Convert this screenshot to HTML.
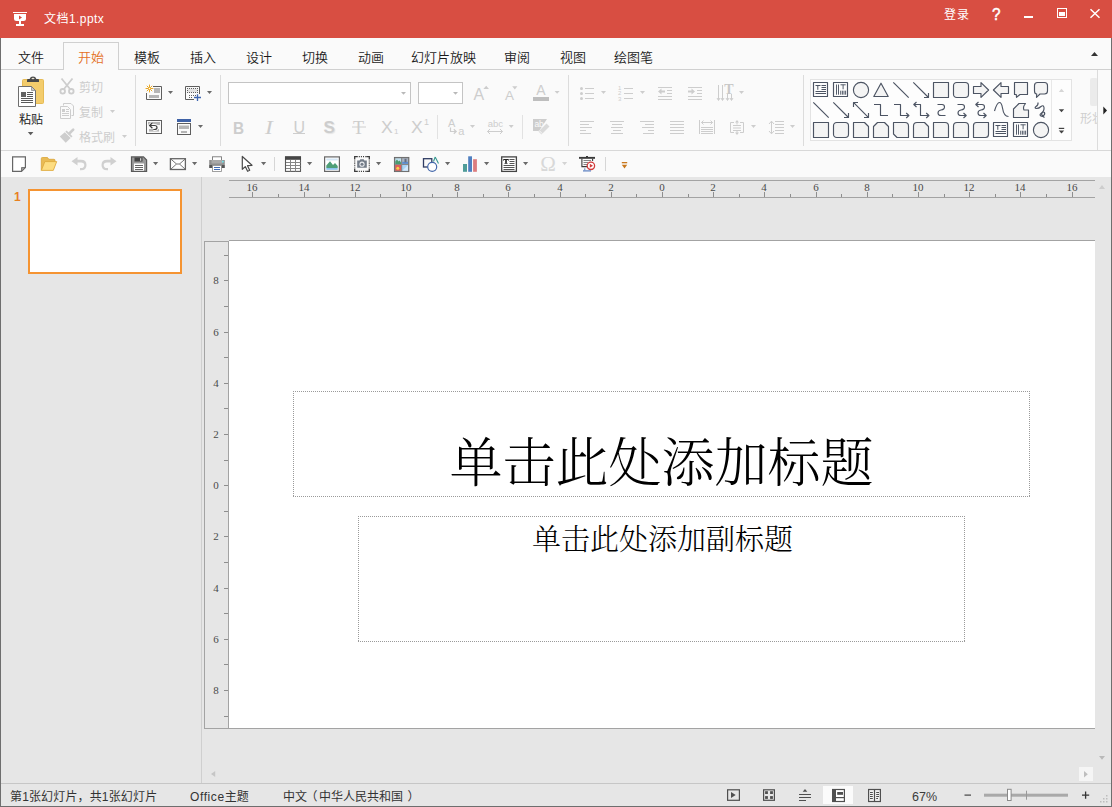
<!DOCTYPE html>
<html lang="zh-CN">
<head>
<meta charset="utf-8">
<title>文档1.pptx</title>
<style>
*{box-sizing:border-box;margin:0;padding:0}
html,body{width:1112px;height:807px;overflow:hidden}
body{position:relative;background:#e6e6e6;font-family:"Liberation Sans","Noto Sans CJK SC",sans-serif;font-size:12px;color:#222}
.abs{position:absolute}
#title{position:absolute;left:0;top:0;width:1112px;height:38px;background:#d84e42;color:#fff}
#title .name{position:absolute;left:44px;top:11px;font-size:12px;line-height:16px;letter-spacing:.45px;white-space:nowrap}
#title .q{position:absolute;left:991.5px;top:6px;font-size:17px;line-height:18px;font-weight:400;-webkit-text-stroke:.5px #fff;transform:scaleX(.9);transform-origin:0 0}
#title .login{position:absolute;left:944px;top:7px;letter-spacing:1px;font-size:12px;line-height:16px;white-space:nowrap}
#tabs{position:absolute;left:0;top:38px;width:1112px;height:32px;background:#fafafa;border-bottom:1px solid #d0d0d0}
#tabs span{position:absolute;top:12px;font-size:13px;line-height:16px;color:#1a1a1a;font-weight:350;white-space:nowrap}
#tabs .act{position:absolute;left:63px;top:4px;width:56px;height:28px;background:#fafafa;border:1px solid #d0d0d0;border-bottom:none}
#tabs span.on{color:#e4701e}
#ribbon{position:absolute;left:0;top:70px;width:1112px;height:81px;background:#fafafa;border-bottom:1px solid #d8d8d8}
.vsep{position:absolute;width:1px;background:#d9d9d9}
#qat{position:absolute;left:0;top:151px;width:1112px;height:26px;background:#fafafa}
#left{position:absolute;left:0;top:177px;width:202px;height:608px;background:#e6e6e6;border-right:1px solid #cfcfcf}
#status{position:absolute;left:0;top:783px;width:1112px;height:24px;background:#e6e6e6;border-top:1px solid #c6c6c6;font-size:12px;color:#333}
#status span{position:absolute;top:5px;line-height:16px;white-space:nowrap}
#winL{position:absolute;left:0;top:38px;width:1px;height:770px;background:#6e6e6e}
#winR{position:absolute;left:1111px;top:38px;width:1px;height:770px;background:#6e6e6e}
#winB{position:absolute;left:0;top:806px;width:1112px;height:1px;background:#6e6e6e}
.dis{color:#c3c3c3}
.tk{position:absolute;width:1px;background:#8e8e8e}
.rn{position:absolute;width:20px;text-align:center;font:normal 11px/15px "Liberation Serif",serif;color:#4a4a4a}
#t1{left:293px;top:429px;width:737px;text-align:center;font-family:"Liberation Serif","Noto Serif CJK SC",serif;font-weight:300;font-size:53px;line-height:70px;color:#000;white-space:nowrap;padding-left:0}
#t2{left:359px;top:520px;width:607px;text-align:center;font-family:"Liberation Serif","Noto Serif CJK SC",serif;font-weight:300;font-size:29px;line-height:40px;color:#000;white-space:nowrap}
svg{position:absolute;overflow:visible}
</style>
</head>
<body>
<!--TITLE-->
<div id="title">
<svg style="left:13px;top:12px" width="14" height="14" viewBox="0 0 14 14"><rect x="0" y="0" width="14" height="1" fill="#fff"/><path d="M1 2H13V6.5Q13 9 10.5 9H3.5Q1 9 1 6.5Z" fill="#fff"/><rect x="6" y="9" width="2" height="3.2" fill="#fff"/><rect x="3" y="12" width="8" height="2" fill="#fff"/><path d="M6 3.4L9 5.4L6 7.4Z" fill="#d84e42"/></svg>
<span class="name">文档1.pptx</span>
<span class="login">登录</span>
<span class="q">?</span>
<div class="abs" style="left:1024px;top:16px;width:9px;height:2px;background:#fff"></div>
<div class="abs" style="left:1057px;top:8px;width:10px;height:10px;border:1px solid #fff"></div>
<div class="abs" style="left:1059px;top:12px;width:6px;height:4px;background:#fff"></div>
<svg style="left:1090px;top:9px" width="10" height="9" viewBox="0 0 10 9"><path d="M0.5 0.3L9.5 8.7M9.5 0.3L0.5 8.7" stroke="#fff" stroke-width="1.5" fill="none"/></svg>
</div>
<!--TABS-->
<div id="tabs">
<div class="act"></div>
<span style="left:18px">文件</span>
<span class="on" style="left:78px">开始</span>
<span style="left:134px">模板</span>
<span style="left:190px">插入</span>
<span style="left:246px">设计</span>
<span style="left:302px">切换</span>
<span style="left:358px">动画</span>
<span style="left:411px">幻灯片放映</span>
<span style="left:504px">审阅</span>
<span style="left:560px">视图</span>
<span style="left:614px">绘图笔</span>
</div>
<!--RIBBON-->
<div id="ribbon"></div>
<div id="rb" class="abs" style="left:0;top:0;width:1112px;height:151px">
<svg style="left:0;top:0" width="1112" height="151" viewBox="0 0 1112 151">
<rect x="135" y="75" width="1" height="71" fill="#dcdcdc"/>
<rect x="220" y="75" width="1" height="71" fill="#dcdcdc"/>
<rect x="568" y="75" width="1" height="71" fill="#dcdcdc"/>
<rect x="803" y="75" width="1" height="71" fill="#dcdcdc"/>
<rect x="437" y="115" width="1" height="24" fill="#e2e2e2"/>
<rect x="522" y="115" width="1" height="24" fill="#e2e2e2"/>
<rect x="22.5" y="79.5" width="21" height="24" rx="1" fill="#f3cc6c" stroke="#e6bb55"/>
<path d="M27 82V80Q27 79 28 79H29.6Q30.4 76.6 33 76.6Q35.600 76.600 36.400 79H38Q39 79 39 80V82Z" fill="#484848"/>
<ellipse cx="33" cy="78.500" rx="1.500" ry="0.800" fill="#e8e2d0"/>
<path d="M18.5 86.5H31.5L35.5 90.5V106.5H18.5Z" fill="#fff" stroke="#6e6e6e"/>
<path d="M31.5 86.5V90.5H35.5Z" fill="#c9c9c9" stroke="#6e6e6e" stroke-width="0.6"/>
<rect x="21" y="92" width="5" height="5" fill="#636363"/>
<rect x="27" y="92" width="6" height="1" fill="#5a5a5a"/>
<rect x="27" y="94" width="6" height="1" fill="#5a5a5a"/>
<rect x="27" y="96" width="6" height="1" fill="#5a5a5a"/>
<rect x="21" y="98" width="12" height="1" fill="#5a5a5a"/>
<rect x="21" y="100" width="12" height="1" fill="#5a5a5a"/>
<rect x="21" y="102" width="12" height="1" fill="#5a5a5a"/>
<path d="M27.8 132h5.6l-2.8 3.2z" fill="#5c5c5c"/>
<g fill="none" stroke="#cdcdcd" stroke-width="1.800"><path d="M61.500 78.500L70.200 89.300M72.500 78.500L63.800 89.300"/><circle cx="62.7" cy="91.3" r="2.3"/><circle cx="71.3" cy="91.3" r="2.3"/></g>
<g fill="none" stroke="#cdcdcd" stroke-width="1"><path d="M63.500 105.500V103.500H71L73.500 106V115.500H71.500"/><path d="M60.500 106.500H67.500L70.500 109.500V118.500H60.500Z" fill="#fafafa"/><path d="M62 113.500H69M62 115.500H69M66 109.500H69M66 111.500H69"/></g>
<rect x="62" y="109" width="3" height="3" fill="#cdcdcd"/>
<path d="M110 110h5l-2.5 3z" fill="#cdcdcd"/>
<path d="M73.200 129.600L69.300 133.500" stroke="#cdcdcd" stroke-width="2.600" stroke-linecap="round"/>
<path d="M66 131.100L71.900 136.900" stroke="#cdcdcd" stroke-width="1.700"/>
<path d="M59.800 136.600L64.800 132.200L70.700 138L65.700 142.700Z" fill="#cdcdcd"/>
<path d="M122 135h5l-2.5 3z" fill="#cdcdcd"/>
<path d="M153 86.5H161.5V99.5H146.5V93" fill="none" stroke="#5e5e5e"/>
<rect x="154" y="88" width="6" height="5" fill="#b5b5b5"/><rect x="149" y="95" width="10" height="3" fill="#b5b5b5"/>
<g stroke="#e9a825" stroke-width="1"><path d="M149.500 84.600V92.400M145.600 88.500H153.400M146.800 85.800L152.200 91.200M152.200 85.800L146.800 91.200"/></g><circle cx="149.500" cy="88.500" r="1.100" fill="#fff" stroke="#e9a825" stroke-width="0.700"/>
<path d="M168 91h5l-2.5 3z" fill="#6a6a6a"/>
<path d="M199.500 94V86.500H185.500V99.500H194" fill="none" stroke="#5e5e5e"/>
<rect x="187.500" y="88.500" width="10" height="4" fill="#e2e2e2"/>
<path d="M187 88.500H198M187 92.500H198M189 95.500H196.500M189 97.500H193" fill="none" stroke="#5e5e5e" stroke-dasharray="1 1"/>
<path d="M187.500 90V91M197.500 90V91" fill="none" stroke="#5e5e5e"/>
<path d="M197.500 94.300V101M194 97.500H201" stroke="#3f66b0" stroke-width="1.300"/>
<path d="M207 91h5l-2.5 3z" fill="#6a6a6a"/>
<rect x="146.500" y="120.500" width="15" height="13" fill="#fafafa" stroke="#5e5e5e"/>
<rect x="148" y="122" width="12" height="3" fill="#b5b5b5"/><rect x="149" y="129" width="10" height="2.600" fill="#b5b5b5"/>
<path d="M150 125.500H154.500Q157 125.500 157 127.500Q157 129.500 154.500 129.500H153.300M152.400 122.800L149.600 125.500L152.400 128.200" fill="none" stroke="#fafafa" stroke-width="3"/>
<path d="M150 125.500H154.500Q157 125.500 157 127.500Q157 129.500 154.500 129.500H153.300" fill="none" stroke="#3e3e3e" stroke-width="1.200"/><path d="M152.400 122.800L149.600 125.500L152.400 128.200" fill="none" stroke="#3e3e3e" stroke-width="1.200"/>
<rect x="177" y="119" width="14" height="3" fill="#3f62a6"/>
<rect x="177.5" y="123.5" width="13" height="11" fill="#fafafa" stroke="#5e5e5e"/>
<rect x="179" y="125.5" width="10" height="3.5" fill="#b5b5b5"/><rect x="181" y="131" width="6" height="2" fill="#b5b5b5"/>
<path d="M198 125h5l-2.5 3z" fill="#6a6a6a"/>
<rect x="228.5" y="82.5" width="182" height="21" fill="#fff" stroke="#c4c4c4"/>
<rect x="418.5" y="82.5" width="44" height="21" fill="#fff" stroke="#c4c4c4"/>
<path d="M401 92h5l-2.5 2.8z" fill="#b9b9b9"/>
<path d="M453 92h5l-2.5 2.8z" fill="#b9b9b9"/>
<path d="M483.4 89L486.2 85.8L489 89Z" fill="#cdcdcd"/>
<path d="M512.2 86.2H517.4L514.8 89.4Z" fill="#cdcdcd"/>
<rect x="533" y="97" width="16" height="4" fill="#bebebe"/>
<path d="M554.6 91h5l-2.5 2.8z" fill="#cdcdcd"/>
<rect x="293" y="133" width="12" height="1" fill="#cdcdcd"/>
<rect x="352" y="126.5" width="14" height="1" fill="#cdcdcd"/>
<path d="M450.500 127.500V131.500H456M453.800 129.200L456.200 131.500L453.800 133.800" fill="none" stroke="#cdcdcd" stroke-width="1.200"/>
<path d="M470 125h5l-2.5 3z" fill="#cdcdcd"/>
<path d="M487.5 131.5H502.5M490 129L487.5 131.5L490 134M500 129L502.5 131.5L500 134" fill="none" stroke="#cdcdcd"/>
<path d="M508.7 125h5l-2.5 3z" fill="#cdcdcd"/>
<path d="M533 119H547L542 126.5L539 131H533Z" fill="#cdcdcd"/>
<path d="M546.5 123.5L549.5 126.5L541.5 134.5L538.5 131.5Z" fill="#dadada"/>
<path d="M539.3 130.7L542.3 133.7" stroke="#fafafa" stroke-width="1"/>
<circle cx="581.5" cy="88.5" r="1.5" fill="#cdcdcd"/>
<rect x="585" y="88" width="9" height="1" fill="#cdcdcd"/>
<rect x="624" y="88" width="9" height="1" fill="#cdcdcd"/>
<circle cx="581.5" cy="93.5" r="1.5" fill="#cdcdcd"/>
<rect x="585" y="93" width="9" height="1" fill="#cdcdcd"/>
<rect x="624" y="93" width="9" height="1" fill="#cdcdcd"/>
<circle cx="581.5" cy="98.5" r="1.5" fill="#cdcdcd"/>
<rect x="585" y="98" width="9" height="1" fill="#cdcdcd"/>
<rect x="624" y="98" width="9" height="1" fill="#cdcdcd"/>
<path d="M601 91h5l-2.5 3z" fill="#cdcdcd"/>
<path d="M640 91h5l-2.5 3z" fill="#cdcdcd"/>
<rect x="658" y="87" width="14" height="1" fill="#cdcdcd"/>
<rect x="688" y="87" width="14" height="1" fill="#cdcdcd"/>
<rect x="658" y="96" width="14" height="1" fill="#cdcdcd"/>
<rect x="688" y="96" width="14" height="1" fill="#cdcdcd"/>
<rect x="658" y="99" width="14" height="1" fill="#cdcdcd"/>
<rect x="688" y="99" width="14" height="1" fill="#cdcdcd"/>
<rect x="667" y="90" width="5" height="1" fill="#cdcdcd"/>
<rect x="697" y="90" width="5" height="1" fill="#cdcdcd"/>
<rect x="667" y="93" width="5" height="1" fill="#cdcdcd"/>
<rect x="697" y="93" width="5" height="1" fill="#cdcdcd"/>
<path d="M658 91.5L661.5 88.5V90.5H665V92.5H661.5V94.5Z" fill="#cdcdcd"/>
<path d="M695 91.5L691.5 88.5V90.5H688V92.5H691.5V94.5Z" fill="#cdcdcd"/>
<path d="M718.5 85V100M722.5 85V100M727.5 94V100M731.5 94V100" stroke="#cdcdcd"/>
<path d="M717 98L718.5 100.5L720 98M721 98L722.5 100.5L724 98M726 98L727.5 100.5L729 98M730 98L731.5 100.5L733 98" fill="none" stroke="#cdcdcd"/>
<path d="M739 91h5l-2.5 3z" fill="#cdcdcd"/>
<rect x="580" y="121" width="14" height="1" fill="#cdcdcd"/>
<rect x="580" y="124" width="9" height="1" fill="#cdcdcd"/>
<rect x="580" y="127" width="12" height="1" fill="#cdcdcd"/>
<rect x="580" y="130" width="6" height="1" fill="#cdcdcd"/>
<rect x="580" y="133" width="11" height="1" fill="#cdcdcd"/>
<rect x="610" y="121" width="14" height="1" fill="#cdcdcd"/>
<rect x="612" y="124" width="10" height="1" fill="#cdcdcd"/>
<rect x="611" y="127" width="12" height="1" fill="#cdcdcd"/>
<rect x="613" y="130" width="8" height="1" fill="#cdcdcd"/>
<rect x="611" y="133" width="12" height="1" fill="#cdcdcd"/>
<rect x="640" y="121" width="14" height="1" fill="#cdcdcd"/>
<rect x="645" y="124" width="9" height="1" fill="#cdcdcd"/>
<rect x="642" y="127" width="12" height="1" fill="#cdcdcd"/>
<rect x="648" y="130" width="6" height="1" fill="#cdcdcd"/>
<rect x="643" y="133" width="11" height="1" fill="#cdcdcd"/>
<rect x="670" y="121" width="14" height="1" fill="#cdcdcd"/>
<rect x="670" y="124" width="14" height="1" fill="#cdcdcd"/>
<rect x="670" y="127" width="14" height="1" fill="#cdcdcd"/>
<rect x="670" y="130" width="14" height="1" fill="#cdcdcd"/>
<rect x="670" y="133" width="14" height="1" fill="#cdcdcd"/>
<rect x="699" y="120" width="1" height="14" fill="#cdcdcd"/>
<rect x="714" y="120" width="1" height="14" fill="#cdcdcd"/>
<path d="M701.5 122.5H712.5M703.5 120.5L701.5 122.5L703.5 124.5M710.5 120.5L712.5 122.5L710.5 124.5" fill="none" stroke="#cdcdcd"/>
<rect x="701" y="127" width="12" height="1" fill="#cdcdcd"/>
<rect x="701" y="129" width="12" height="1" fill="#cdcdcd"/>
<rect x="701" y="131" width="12" height="1" fill="#cdcdcd"/>
<rect x="701" y="133" width="12" height="1" fill="#cdcdcd"/>
<path d="M734 122.5H730.5V132.5H734M740 122.5H743.5V132.5H740" fill="none" stroke="#cdcdcd"/>
<rect x="733" y="125" width="8" height="1" fill="#cdcdcd"/>
<rect x="733" y="127.5" width="8" height="1" fill="#cdcdcd"/>
<rect x="733" y="130" width="8" height="1" fill="#cdcdcd"/>
<path d="M737 120L739 122.5H735ZM737 135L739 132.5H735Z" fill="#cdcdcd"/>
<rect x="736.5" y="122" width="1" height="2.5" fill="#cdcdcd"/>
<rect x="736.5" y="131" width="1" height="2" fill="#cdcdcd"/>
<path d="M751 125h5l-2.5 3z" fill="#cdcdcd"/>
<path d="M771.5 121.5V133.5M769 124L771.5 121.2L774 124M769 131L771.5 133.8L774 131" fill="none" stroke="#cdcdcd"/>
<rect x="775" y="121" width="9" height="1" fill="#cdcdcd"/>
<rect x="775" y="124" width="9" height="1" fill="#cdcdcd"/>
<rect x="775" y="127" width="9" height="1" fill="#cdcdcd"/>
<rect x="775" y="130" width="9" height="1" fill="#cdcdcd"/>
<rect x="775" y="133" width="9" height="1" fill="#cdcdcd"/>
<path d="M790 125h5l-2.5 3z" fill="#cdcdcd"/>
<rect x="810.5" y="79.5" width="261" height="61" fill="#fdfdfd" stroke="#e3e3e3"/>
<rect x="1051" y="80" width="1" height="60" fill="#e8e8e8"/>
<path d="M1058.800 92L1061.500 88.800L1064.200 92Z" fill="#d6d6d6"/>
<path d="M1058.800 109.200H1064.200L1061.500 112.200Z" fill="#444"/>
<rect x="1058.800" y="127.800" width="5.400" height="1.200" fill="#444"/><path d="M1058.800 130.400H1064.200L1061.500 133.500Z" fill="#444"/>
<g transform="translate(813 82)" fill="#f4f4f4" stroke="#4c5463" stroke-width="1.15" stroke-linejoin="round"><rect x="0.5" y="0.5" width="14" height="14" fill="#fdfdfd"/><path d="M2.500 3.500H7.500M4.800 3.500V7.800M8.500 3.500H13M8.500 5.500H13M8.500 7.500H13M2.500 9.500H13M2.500 11.500H13" fill="none" stroke-width="1"/></g>
<g transform="translate(833 82)" fill="#f4f4f4" stroke="#4c5463" stroke-width="1.15" stroke-linejoin="round"><rect x="0.5" y="0.5" width="14" height="14" fill="#fdfdfd"/><path d="M3.500 2.500V12.700M5.500 2.500V12.700M7.500 2.800H12.700M10.100 2.800V7.300M7.700 8.700V12.700M9.400 8.700V12.700M11 8.700V12.700M12.600 8.700V12.700" fill="none" stroke-width="0.950"/></g>
<g transform="translate(853 82)" fill="#f4f4f4" stroke="#4c5463" stroke-width="1.15" stroke-linejoin="round"><circle cx="8" cy="8" r="7.6"/></g>
<g transform="translate(873 82)" fill="#f4f4f4" stroke="#4c5463" stroke-width="1.15" stroke-linejoin="round"><path d="M8 1.2L15.2 14.5H0.8Z"/></g>
<g transform="translate(893 82)" fill="#f4f4f4" stroke="#4c5463" stroke-width="1.15" stroke-linejoin="round"><path d="M0.3 0.3L15.7 15.7" fill="none"/></g>
<g transform="translate(913 82)" fill="#f4f4f4" stroke="#4c5463" stroke-width="1.15" stroke-linejoin="round"><path d="M0.3 0.3L15.5 15.5M11 15.5H15.5V11" fill="none"/></g>
<g transform="translate(933 82)" fill="#f4f4f4" stroke="#4c5463" stroke-width="1.15" stroke-linejoin="round"><rect x="0.5" y="0.5" width="15" height="15"/></g>
<g transform="translate(953 82)" fill="#f4f4f4" stroke="#4c5463" stroke-width="1.15" stroke-linejoin="round"><rect x="0.5" y="0.5" width="15" height="15" rx="3.2"/></g>
<g transform="translate(973 82)" fill="#f4f4f4" stroke="#4c5463" stroke-width="1.15" stroke-linejoin="round"><path d="M0.5 4.5H8V0.6L15.6 8L8 15.4V11.5H0.5Z"/></g>
<g transform="translate(993 82)" fill="#f4f4f4" stroke="#4c5463" stroke-width="1.15" stroke-linejoin="round"><path d="M15.5 4.5H8V0.6L0.4 8L8 15.4V11.5H15.5Z"/></g>
<g transform="translate(1013 82)" fill="#f4f4f4" stroke="#4c5463" stroke-width="1.15" stroke-linejoin="round"><path d="M1.500 0.500H14.500V12.500H7L3.500 15.300L3.300 12.500H1.500Z"/></g>
<g transform="translate(1033 82)" fill="#f4f4f4" stroke="#4c5463" stroke-width="1.15" stroke-linejoin="round"><path d="M4.500 0.500H11.500Q14.500 0.500 14.500 3.500V9Q14.500 12 11.500 12H7L3.500 15.300L3.700 12Q1.500 12 1.500 9V3.500Q1.500 0.500 4.500 0.500Z"/></g>
<g transform="translate(813 102)" fill="#f4f4f4" stroke="#4c5463" stroke-width="1.15" stroke-linejoin="round"><path d="M0.3 0.3L15.7 15.7" fill="none"/></g>
<g transform="translate(833 102)" fill="#f4f4f4" stroke="#4c5463" stroke-width="1.15" stroke-linejoin="round"><path d="M0.3 0.3L15.5 15.5M11 15.5H15.5V11" fill="none"/></g>
<g transform="translate(853 102)" fill="#f4f4f4" stroke="#4c5463" stroke-width="1.15" stroke-linejoin="round"><path d="M0.7 0.7L15.3 15.3M11 15.5H15.5V11M5 0.5H0.5V5" fill="none"/></g>
<g transform="translate(873 102)" fill="#f4f4f4" stroke="#4c5463" stroke-width="1.15" stroke-linejoin="round"><path d="M1 2.500H7.500V13.500H15" fill="none"/></g>
<g transform="translate(893 102)" fill="#f4f4f4" stroke="#4c5463" stroke-width="1.15" stroke-linejoin="round"><path d="M1 2.500H7.500V13.500H15.700M13.200 11L15.900 13.500L13.200 16" fill="none"/></g>
<g transform="translate(913 102)" fill="#f4f4f4" stroke="#4c5463" stroke-width="1.15" stroke-linejoin="round"><path d="M1 2.500H7.500V13.500H15.700M13.200 11L15.900 13.500L13.200 16M3.500 0L0.800 2.500L3.500 5" fill="none"/></g>
<g transform="translate(933 102)" fill="#f4f4f4" stroke="#4c5463" stroke-width="1.15" stroke-linejoin="round"><path d="M4.5 2.5H9Q11.5 2.5 11.5 5Q11.5 7.5 8 8Q5 8.5 5 11Q5 13.5 8 13.5H12.5" fill="none"/></g>
<g transform="translate(953 102)" fill="#f4f4f4" stroke="#4c5463" stroke-width="1.15" stroke-linejoin="round"><path d="M4.5 2.5H9Q11.5 2.5 11.5 5Q11.5 7.5 8 8Q5 8.5 5 11Q5 13.5 8 13.5H13M10.5 11L13.2 13.5L10.5 16" fill="none"/></g>
<g transform="translate(973 102)" fill="#f4f4f4" stroke="#4c5463" stroke-width="1.15" stroke-linejoin="round"><path d="M3.5 2.5H9Q11.5 2.5 11.5 5Q11.5 7.5 8 8Q5 8.5 5 11Q5 13.5 8 13.5H13M10.5 11L13.2 13.5L10.5 16M5.5 0L2.8 2.5L5.5 5" fill="none"/></g>
<g transform="translate(993 102)" fill="#f4f4f4" stroke="#4c5463" stroke-width="1.15" stroke-linejoin="round"><path d="M1.5 9Q4 0.5 6.5 0.5Q8.5 0.5 9.5 6Q10.8 14.5 15.5 14.5" fill="none"/></g>
<g transform="translate(1013 102)" fill="#f4f4f4" stroke="#4c5463" stroke-width="1.15" stroke-linejoin="round"><path d="M0.5 15.5V7L6 1.5H12.5Q9.5 5 11 8H15.5V15.5Z"/></g>
<g transform="translate(1033 102)" fill="#f4f4f4" stroke="#4c5463" stroke-width="1.15" stroke-linejoin="round"><path d="M5 0.5Q5.5 3 3 4.5Q1 6 3.5 6.5Q6 6.500 8 4.5Q10.5 2.500 11 5.500Q11.500 9 8 11.500Q5.500 13.500 9.500 14.500Q12.500 12.500 11.500 10.500Q10 9 8.500 12Q9.500 14.500 11.500 15.500" fill="none"/></g>
<g transform="translate(813 122)" fill="#f4f4f4" stroke="#4c5463" stroke-width="1.15" stroke-linejoin="round"><rect x="0.5" y="0.5" width="15" height="15"/></g>
<g transform="translate(833 122)" fill="#f4f4f4" stroke="#4c5463" stroke-width="1.15" stroke-linejoin="round"><rect x="0.5" y="0.5" width="15" height="15" rx="3.2"/></g>
<g transform="translate(853 122)" fill="#f4f4f4" stroke="#4c5463" stroke-width="1.15" stroke-linejoin="round"><path d="M0.5 0.5H11.5L15.5 4.5V15.5H0.5Z"/></g>
<g transform="translate(873 122)" fill="#f4f4f4" stroke="#4c5463" stroke-width="1.15" stroke-linejoin="round"><path d="M4.5 0.500H11.500L15.500 4.500V15.500H0.500V4.500Z"/></g>
<g transform="translate(893 122)" fill="#f4f4f4" stroke="#4c5463" stroke-width="1.15" stroke-linejoin="round"><path d="M0.5 0.5H12Q15.5 0.5 15.5 4V15.5H4L0.5 12Z"/></g>
<g transform="translate(913 122)" fill="#f4f4f4" stroke="#4c5463" stroke-width="1.15" stroke-linejoin="round"><path d="M4 0.5H11.5L15.5 4.5V15.5H0.5V4Q0.5 0.5 4 0.5Z"/></g>
<g transform="translate(933 122)" fill="#f4f4f4" stroke="#4c5463" stroke-width="1.15" stroke-linejoin="round"><path d="M0.5 0.5H12Q15.5 0.5 15.5 4V15.5H0.5Z"/></g>
<g transform="translate(953 122)" fill="#f4f4f4" stroke="#4c5463" stroke-width="1.15" stroke-linejoin="round"><path d="M4 0.5H12Q15.5 0.5 15.5 4V15.5H0.5V4Q0.5 0.5 4 0.5Z"/></g>
<g transform="translate(973 122)" fill="#f4f4f4" stroke="#4c5463" stroke-width="1.15" stroke-linejoin="round"><path d="M3.500 0.500H15.500V12.500Q15.500 15.500 12.500 15.500H0.500V3.500Q0.500 0.500 3.500 0.500Z"/></g>
<g transform="translate(993 122)" fill="#f4f4f4" stroke="#4c5463" stroke-width="1.15" stroke-linejoin="round"><rect x="0.5" y="0.5" width="14" height="14" fill="#fdfdfd"/><path d="M2.500 3.500H7.500M4.800 3.500V7.800M8.500 3.500H13M8.500 5.500H13M8.500 7.500H13M2.500 9.500H13M2.500 11.500H13" fill="none" stroke-width="1"/></g>
<g transform="translate(1013 122)" fill="#f4f4f4" stroke="#4c5463" stroke-width="1.15" stroke-linejoin="round"><rect x="0.5" y="0.5" width="14" height="14" fill="#fdfdfd"/><path d="M3.500 2.500V12.700M5.500 2.500V12.700M7.500 2.800H12.700M10.100 2.800V7.300M7.700 8.700V12.700M9.400 8.700V12.700M11 8.700V12.700M12.600 8.700V12.700" fill="none" stroke-width="0.950"/></g>
<g transform="translate(1033 122)" fill="#f4f4f4" stroke="#4c5463" stroke-width="1.15" stroke-linejoin="round"><circle cx="8" cy="8" r="7.6"/></g>
<rect x="1090" y="78" width="8" height="28" rx="2" fill="#ebebeb"/>
<rect x="1097" y="70" width="1" height="80" fill="#dcdcdc"/>
<rect x="1098" y="70" width="13" height="80" fill="#fafafa"/>
<path d="M1103.300 106.500L1107 110.500L1103.300 114.500Z" fill="#222"/>
<path d="M1091 56L1094.500 52L1098 56Z" fill="#333"/>
</svg>
<span class="abs" style="left:19px;top:112px;font-size:12px;line-height:16px;color:#1c1c1c;white-space:nowrap;">粘贴</span>
<span class="abs" style="left:79px;top:80px;font-size:12px;line-height:16px;color:#cdcdcd;white-space:nowrap;">剪切</span>
<span class="abs" style="left:79px;top:105px;font-size:12px;line-height:16px;color:#cdcdcd;white-space:nowrap;">复制</span>
<span class="abs" style="left:79px;top:130px;font-size:12px;line-height:16px;color:#cdcdcd;white-space:nowrap;">格式刷</span>
<span class="abs" style="left:473.5px;top:85px;font-size:16px;line-height:20px;color:#cdcdcd;white-space:nowrap;font-weight:400">A</span>
<span class="abs" style="left:505px;top:87px;font-size:13.5px;line-height:17.5px;color:#cdcdcd;white-space:nowrap;">A</span>
<span class="abs" style="left:536.3px;top:80.5px;font-size:14px;line-height:18px;color:#cdcdcd;white-space:nowrap;">A</span>
<span class="abs" style="left:233px;top:117.5px;font-size:17px;line-height:21px;color:#cdcdcd;white-space:nowrap;font-weight:bold;transform:scaleX(.9);transform-origin:0 0">B</span>
<span class="abs" style="left:265px;top:118px;font-size:17px;line-height:21px;color:#cdcdcd;white-space:nowrap;font-style:italic;font-family:'Liberation Serif',serif;font-size:18px;transform:scaleX(1.3);transform-origin:0 0">I</span>
<span class="abs" style="left:293.6px;top:118px;font-size:16px;line-height:20px;color:#cdcdcd;white-space:nowrap;">U</span>
<span class="abs" style="left:323.5px;top:117px;font-size:17px;line-height:21px;color:#cdcdcd;white-space:nowrap;font-weight:bold;text-shadow:1px 1px 1px #e4e4e4">S</span>
<span class="abs" style="left:353px;top:117px;font-size:18px;line-height:22px;color:#cdcdcd;white-space:nowrap;font-family:'Liberation Serif',serif">T</span>
<span class="abs" style="left:381px;top:118px;font-size:16px;line-height:20px;color:#cdcdcd;white-space:nowrap;transform:scaleX(1.1);transform-origin:0 0">X</span>
<span class="abs" style="left:394px;top:126px;font-size:8px;line-height:12px;color:#cdcdcd;white-space:nowrap;">1</span>
<span class="abs" style="left:411px;top:118px;font-size:16px;line-height:20px;color:#cdcdcd;white-space:nowrap;transform:scaleX(1.1);transform-origin:0 0">X</span>
<span class="abs" style="left:424px;top:115.5px;font-size:9px;line-height:13px;color:#cdcdcd;white-space:nowrap;">1</span>
<span class="abs" style="left:448px;top:116px;font-size:11px;line-height:15px;color:#cdcdcd;white-space:nowrap;">A</span>
<span class="abs" style="left:458.3px;top:124px;font-size:11px;line-height:15px;color:#cdcdcd;white-space:nowrap;">a</span>
<span class="abs" style="left:487.8px;top:116.7px;font-size:9.5px;line-height:13.5px;color:#cdcdcd;white-space:nowrap;letter-spacing:-0.1px">abc</span>
<span class="abs" style="left:534.5px;top:117.5px;font-size:8.5px;line-height:12.5px;color:#fafafa;white-space:nowrap;letter-spacing:-0.3px">ab</span>
<span class="abs" style="left:618px;top:84.5px;font-size:6px;line-height:6px;color:#cdcdcd">1</span>
<span class="abs" style="left:618px;top:90px;font-size:6px;line-height:6px;color:#cdcdcd">2</span>
<span class="abs" style="left:618px;top:95.5px;font-size:6px;line-height:6px;color:#cdcdcd">3</span>
<span class="abs" style="left:724.3px;top:80.5px;font-size:14px;line-height:18px;color:#c8c8c8;white-space:nowrap;font-family:'Liberation Serif',serif;font-weight:bold">T</span>
<span class="abs" style="left:1080px;top:111px;font-size:12px;line-height:16px;color:#cfcfcf;white-space:nowrap;width:17px;overflow:hidden">形状</span>
</div>
<!--QAT-->
<div id="qat"></div>
<div class="abs" style="left:0;top:0;width:1112px;height:0">
<svg style="left:0;top:151px" width="700" height="26" viewBox="0 151 700 26">
<path d="M12.6 156.9H25.4V167.5L21.5 171.4H12.6Z" fill="#fff" stroke="#666" stroke-width="1.2"/>
<path d="M25.400 167.500H21.500V171.400Z" fill="#999" stroke="#666" stroke-width="0.8"/>
<path d="M41.300 170.300V158.500Q41.300 157.500 42.300 157.500H47.500L48.800 159.300H54Q55 159.300 55 160.300V162H45.500L41.300 170.300Z" fill="#e9bb55" stroke="#d9a437" stroke-width="0.8"/>
<path d="M41.400 170.400L44.800 161.600H56.700L53.300 170.400Z" fill="#fddd82" stroke="#dfab3f" stroke-width="0.9"/>
<path d="M71.500 161.300L77.500 157V159.800H81Q86.500 159.800 86.500 165Q86.500 170.300 81 170.300H80V168.100H81Q84.300 168.100 84.300 165Q84.300 162.500 81 162.500H77.500V165.600Z" fill="#d0d0d0"/>
<path d="M116.500 161.300L110.500 157V159.800H107Q101.500 159.800 101.500 165Q101.500 170.300 107 170.300H108V168.100H107Q103.700 168.100 103.700 165Q103.700 162.500 107 162.500H110.500V165.600Z" fill="#d0d0d0"/>
<path d="M131.500 156.900H143.500L146.600 160V171.300H131.500Z" fill="#9b9b9b" stroke="#595959" stroke-width="1.2"/>
<rect x="134.500" y="157.500" width="8" height="4" fill="#444"/><rect x="140" y="158.200" width="1.300" height="2.600" fill="#cfcfcf"/>
<rect x="134" y="163.500" width="10" height="7.200" fill="#fff"/>
<path d="M135 165.500H143M135 167.500H143M135 169.500H143" stroke="#555" stroke-width="0.9"/>
<path d="M153 162h5.2l-2.6 3.2z" fill="#6a6a6a"/>
<rect x="170.400" y="158.700" width="15" height="10.800" fill="#fff" stroke="#666" stroke-width="1.300"/>
<path d="M170.800 159L176.500 164H179.500L185.200 159M170.800 169.200L176.500 164M185.200 169.200L179.500 164" fill="none" stroke="#666" stroke-width="0.9"/>
<path d="M192 162h5.2l-2.6 3.2z" fill="#6a6a6a"/>
<rect x="212.500" y="156.800" width="9" height="4" fill="#fff" stroke="#777" stroke-width="0.9"/>
<rect x="209.200" y="160" width="15.600" height="5" fill="#8f8f8f"/><rect x="209.200" y="165" width="15.600" height="3" fill="#555"/>
<rect x="211.500" y="160" width="11" height="3.500" fill="#a9a9a9"/>
<rect x="222" y="160.800" width="1.700" height="1.700" fill="#6fe3e9"/>
<rect x="212.500" y="165.300" width="9" height="6.200" fill="#fff" stroke="#888" stroke-width="0.8"/>
<path d="M214 167.500H220M214 169.500H220" stroke="#3f6bb5" stroke-width="1"/>
<path d="M242.300 156.500V169.300L245.300 166.600L247.600 171.300L249.700 170.300L247.500 165.700L252 165.300Z" fill="#fff" stroke="#4a4a4a" stroke-width="1.200" stroke-linejoin="round"/>
<path d="M261 162h5.2l-2.6 3.2z" fill="#6a6a6a"/>
<rect x="274" y="157" width="1" height="14" fill="#d6d6d6"/>
<rect x="285.500" y="156.900" width="15" height="14.500" fill="#fff" stroke="#5a5a5a" stroke-width="1.100"/>
<rect x="285" y="156.400" width="16" height="3.400" fill="#454545"/>
<path d="M290.500 160V171.500M295.500 160V171.500M286 162.500H300.500M286 165.500H300.500M286 168.500H300.500" stroke="#858585" stroke-width="1"/>
<path d="M307 162h5.2l-2.6 3.2z" fill="#6a6a6a"/>
<rect x="324.600" y="156.900" width="14.800" height="14.500" fill="#fff" stroke="#666" stroke-width="1.200"/>
<rect x="326.300" y="158.500" width="11.400" height="2" fill="#d5e7f6"/>
<path d="M326.300 168V165.500L330 161.300L333 165L335 163L337.700 166V168Z" fill="#4f9f78"/>
<rect x="326.300" y="168" width="11.400" height="1.800" fill="#8cc3ee"/>
<path d="M358.800 156.600H365.800M358.800 171.400H365.800" fill="none" stroke="#3c3c3c" stroke-width="1.200" stroke-dasharray="1.050 1.050"/>
<path d="M354.700 160.500V167.500M369.300 160.500V167.500" fill="none" stroke="#3c3c3c" stroke-width="1.200" stroke-dasharray="1.050 1.050"/>
<path d="M354.700 159.500V156.600H357.800M366.200 156.600H369.300V159.500M369.300 168.500V171.400H366.200M357.800 171.400H354.700V168.500" fill="none" stroke="#3c3c3c" stroke-width="1.300"/>
<path d="M357.200 160.500H359.600L360.400 159.200H363.600L364.400 160.500H366.800V167.800H357.200Z" fill="#737c88"/>
<circle cx="362" cy="164.200" r="2.600" fill="#e9ebee"/><circle cx="362" cy="164.200" r="1.500" fill="#737c88"/>
<path d="M376 162h5.2l-2.6 3.2z" fill="#6a6a6a"/>
<rect x="394.400" y="157.400" width="14.500" height="14.200" fill="#888" stroke="#666" stroke-width="0.900"/>
<rect x="395.300" y="158.300" width="5.700" height="5.600" fill="#bfe0f0"/><path d="M395.300 163.900V161.500L397 159.500L398.500 161.500L399.500 160.500L401 162.500V163.900Z" fill="#4a9a6f"/>
<rect x="402.200" y="158.300" width="5.800" height="5.600" fill="#a8b4c4"/><rect x="402.200" y="161.800" width="5.800" height="2.100" fill="#5d8fd0"/><rect x="404.500" y="158.800" width="2" height="3.500" fill="#666f80"/>
<rect x="395.300" y="165" width="5.700" height="5.700" fill="#e25d58"/><circle cx="397.800" cy="168.200" r="1.500" fill="#f7d24a"/>
<rect x="402.200" y="165" width="5.800" height="5.700" fill="#a9d3f5"/><path d="M402.200 170.700L408 165V170.700Z" fill="#d3e9fb"/>
<rect x="423.500" y="158.700" width="8.300" height="8.300" fill="none" stroke="#2f3c63" stroke-width="1.300"/>
<path d="M435.200 157L433.500 161.500M435.200 157L438.500 163.500" fill="none" stroke="#3a9a92" stroke-width="1.100"/>
<circle cx="432.200" cy="166.800" r="4.500" fill="#fff" stroke="#4468ab" stroke-width="1.200"/>
<path d="M445 162h5.2l-2.6 3.2z" fill="#6a6a6a"/>
<rect x="463" y="164" width="4" height="7.800" fill="#4f9c98"/><rect x="468.200" y="156.300" width="3.800" height="15.500" fill="#4f7fc0"/><rect x="473.100" y="159.200" width="3.800" height="12.600" fill="#dc7d7f"/>
<path d="M484 162h5.2l-2.6 3.2z" fill="#6a6a6a"/>
<rect x="501.700" y="156.900" width="14.700" height="14.500" fill="#fff" stroke="#444" stroke-width="1.300"/>
<path d="M509.500 159.500H514.500M509.500 161.500H514.500M509.500 163.500H514.500M503.500 165.500H514.500M503.500 167.500H514.500M503.500 169.500H514.500" stroke="#444" stroke-width="0.900"/>
<path d="M503.300 159H508.700V160.800H508V159.900H506.800V163H507.500V163.800H504.500V163H505.200V159.900H504V160.800H503.300Z" fill="#222"/>
<path d="M523 162h5.2l-2.6 3.2z" fill="#6a6a6a"/>
<path d="M562 162h5.2l-2.6 3.2z" fill="#d4d4d4"/>
<rect x="579" y="156.900" width="16" height="1.900" fill="#3a3a3a"/><rect x="586" y="156" width="2" height="1.200" fill="#3a3a3a"/>
<path d="M581.900 158.800V166.600H587M592.600 158.800V161" fill="none" stroke="#3a3a3a" stroke-width="1.100"/>
<path d="M583.500 160.500H591M583.500 162.500H588M583.500 164.500H587" stroke="#777" stroke-width="0.900"/>
<circle cx="590.900" cy="165.800" r="3.700" fill="#fff" stroke="#d23b3b" stroke-width="1.300"/><path d="M589.800 163.800L593 165.800L589.800 167.800Z" fill="#d23b3b"/>
<rect x="583" y="170.300" width="8" height="1.200" fill="#5a7fc0"/><rect x="584.300" y="168.300" width="1" height="2" fill="#5a7fc0"/>
<rect x="605" y="157" width="1" height="14" fill="#d6d6d6"/>
<rect x="621.800" y="162" width="5.400" height="1.300" fill="#c8781e"/><path d="M621.800 164.700H627.200L624.500 168.600Z" fill="#c8781e"/>
</svg>
<span class="abs" style="left:540.3px;top:151.500px;font:21px/24px 'Liberation Serif',serif;color:#d8d8d8">Ω</span>
</div>
<!--LEFT-->
<div id="left">
<span class="abs" style="left:14px;top:13px;font-size:12px;line-height:14px;font-weight:bold;color:#e8801f">1</span>
<div class="abs" style="left:28px;top:12px;width:154px;height:85px;background:#fff;border:2px solid #f59432"></div>
</div>
<!--MAIN-->
<div id="main">
<div class="abs" style="left:229px;top:180px;width:866px;height:1px;background:#a3a3a3"></div>
<div class="abs" style="left:229px;top:197px;width:866px;height:1px;background:#a3a3a3"></div>
<i class="tk" style="left:252px;top:192px;height:5px"></i>
<b class="rn" style="left:242px;top:180px">16</b>
<i class="tk" style="left:278px;top:194px;height:3px"></i>
<i class="tk" style="left:304px;top:192px;height:5px"></i>
<b class="rn" style="left:294px;top:180px">14</b>
<i class="tk" style="left:329px;top:194px;height:3px"></i>
<i class="tk" style="left:355px;top:192px;height:5px"></i>
<b class="rn" style="left:345px;top:180px">12</b>
<i class="tk" style="left:380px;top:194px;height:3px"></i>
<i class="tk" style="left:406px;top:192px;height:5px"></i>
<b class="rn" style="left:396px;top:180px">10</b>
<i class="tk" style="left:432px;top:194px;height:3px"></i>
<i class="tk" style="left:457px;top:192px;height:5px"></i>
<b class="rn" style="left:447px;top:180px">8</b>
<i class="tk" style="left:483px;top:194px;height:3px"></i>
<i class="tk" style="left:508px;top:192px;height:5px"></i>
<b class="rn" style="left:498px;top:180px">6</b>
<i class="tk" style="left:534px;top:194px;height:3px"></i>
<i class="tk" style="left:560px;top:192px;height:5px"></i>
<b class="rn" style="left:550px;top:180px">4</b>
<i class="tk" style="left:585px;top:194px;height:3px"></i>
<i class="tk" style="left:611px;top:192px;height:5px"></i>
<b class="rn" style="left:601px;top:180px">2</b>
<i class="tk" style="left:636px;top:194px;height:3px"></i>
<i class="tk" style="left:662px;top:192px;height:5px"></i>
<b class="rn" style="left:652px;top:180px">0</b>
<i class="tk" style="left:688px;top:194px;height:3px"></i>
<i class="tk" style="left:713px;top:192px;height:5px"></i>
<b class="rn" style="left:703px;top:180px">2</b>
<i class="tk" style="left:739px;top:194px;height:3px"></i>
<i class="tk" style="left:764px;top:192px;height:5px"></i>
<b class="rn" style="left:754px;top:180px">4</b>
<i class="tk" style="left:790px;top:194px;height:3px"></i>
<i class="tk" style="left:816px;top:192px;height:5px"></i>
<b class="rn" style="left:806px;top:180px">6</b>
<i class="tk" style="left:841px;top:194px;height:3px"></i>
<i class="tk" style="left:867px;top:192px;height:5px"></i>
<b class="rn" style="left:857px;top:180px">8</b>
<i class="tk" style="left:892px;top:194px;height:3px"></i>
<i class="tk" style="left:918px;top:192px;height:5px"></i>
<b class="rn" style="left:908px;top:180px">10</b>
<i class="tk" style="left:944px;top:194px;height:3px"></i>
<i class="tk" style="left:969px;top:192px;height:5px"></i>
<b class="rn" style="left:959px;top:180px">12</b>
<i class="tk" style="left:995px;top:194px;height:3px"></i>
<i class="tk" style="left:1020px;top:192px;height:5px"></i>
<b class="rn" style="left:1010px;top:180px">14</b>
<i class="tk" style="left:1046px;top:194px;height:3px"></i>
<i class="tk" style="left:1072px;top:192px;height:5px"></i>
<b class="rn" style="left:1062px;top:180px">16</b>
<div class="abs" style="left:204px;top:241px;width:25px;height:488px;border:1px solid #a3a3a3"></div>
<div id="slide" class="abs" style="left:229px;top:240px;width:866px;height:489px;background:#fff;border-top:1px solid #a3a3a3;border-bottom:1px solid #a3a3a3"></div>
<i class="tk" style="left:224px;top:255px;width:4px;height:1px"></i>
<i class="tk" style="left:224px;top:280px;width:4px;height:1px"></i>
<b class="rn" style="left:206px;top:273px">8</b>
<i class="tk" style="left:224px;top:306px;width:4px;height:1px"></i>
<i class="tk" style="left:224px;top:332px;width:4px;height:1px"></i>
<b class="rn" style="left:206px;top:325px">6</b>
<i class="tk" style="left:224px;top:357px;width:4px;height:1px"></i>
<i class="tk" style="left:224px;top:383px;width:4px;height:1px"></i>
<b class="rn" style="left:206px;top:376px">4</b>
<i class="tk" style="left:224px;top:408px;width:4px;height:1px"></i>
<i class="tk" style="left:224px;top:434px;width:4px;height:1px"></i>
<b class="rn" style="left:206px;top:427px">2</b>
<i class="tk" style="left:224px;top:460px;width:4px;height:1px"></i>
<i class="tk" style="left:224px;top:485px;width:4px;height:1px"></i>
<b class="rn" style="left:206px;top:478px">0</b>
<i class="tk" style="left:224px;top:511px;width:4px;height:1px"></i>
<i class="tk" style="left:224px;top:536px;width:4px;height:1px"></i>
<b class="rn" style="left:206px;top:529px">2</b>
<i class="tk" style="left:224px;top:562px;width:4px;height:1px"></i>
<i class="tk" style="left:224px;top:588px;width:4px;height:1px"></i>
<b class="rn" style="left:206px;top:581px">4</b>
<i class="tk" style="left:224px;top:613px;width:4px;height:1px"></i>
<i class="tk" style="left:224px;top:639px;width:4px;height:1px"></i>
<b class="rn" style="left:206px;top:632px">6</b>
<i class="tk" style="left:224px;top:664px;width:4px;height:1px"></i>
<i class="tk" style="left:224px;top:690px;width:4px;height:1px"></i>
<b class="rn" style="left:206px;top:683px">8</b>
<i class="tk" style="left:224px;top:716px;width:4px;height:1px"></i>
<svg style="left:293px;top:391px" width="737" height="106" shape-rendering="crispEdges"><path d="M0 0.500H737M0 105.5H737M0.500 0V106M736.5 0V106" fill="none" stroke="#9a9a9a" stroke-width="1" stroke-dasharray="1 1"/></svg>
<svg style="left:358px;top:516px" width="607" height="126" shape-rendering="crispEdges"><path d="M0 0.500H607M0 125.5H607M0.500 0V126M606.5 0V126" fill="none" stroke="#9a9a9a" stroke-width="1" stroke-dasharray="1 1"/></svg>
<div id="t1" class="abs">单击此处添加标题</div>
<div id="t2" class="abs">单击此处添加副标题</div>
<svg style="left:1099px;top:185px" width="6" height="4"><path d="M0 4L3 0L6 4Z" fill="#cdcdcd"/></svg>
<svg style="left:1099px;top:756px" width="6" height="4"><path d="M0 0L3 3.700L6 0Z" fill="#b9b9b9"/></svg>
<div class="abs" style="left:1079px;top:767px;width:14px;height:14px;background:#f5f5f5"></div>
<svg style="left:1084px;top:771px" width="4" height="6.400"><path d="M0 0L3.800 3.200L0 6.400Z" fill="#bebebe"/></svg>
<svg style="left:211px;top:771px" width="4.200" height="6"><path d="M4.200 0L0 3L4.200 6Z" fill="#c6c6c6"/></svg>
</div>
<!--STATUS-->
<div id="status">
<span style="left:10px;letter-spacing:.15px">第1张幻灯片，共1张幻灯片</span>
<span style="left:190px"><span style="position:static;letter-spacing:.6px">Office</span>主题</span>
<span style="left:283px">中文<span style="position:relative;top:0;left:-1.5px">（</span>中华人民共和国<span style="position:relative;top:0;left:4.5px">）</span></span>
<span style="left:912px;font-size:12.5px;margin-top:-0.5px;color:#3c3c3c">67%</span>
</div>
<svg style="left:700px;top:784px" width="412" height="23" viewBox="700 784 412 23">
<rect x="727.600" y="789.800" width="11.800" height="10.500" fill="none" stroke="#4f4f4f" stroke-width="1.200"/><path d="M731 791.900L735.700 794.900L731 797.900Z" fill="#4f4f4f"/>
<rect x="763.600" y="789.800" width="10.800" height="10.500" fill="none" stroke="#4f4f4f" stroke-width="1.200"/>
<rect x="765.1" y="791.2" width="2.800" height="2.800" fill="#4f4f4f"/>
<rect x="770.1" y="791.2" width="2.800" height="2.800" fill="#4f4f4f"/>
<rect x="765.1" y="796.1" width="2.800" height="2.800" fill="#4f4f4f"/>
<rect x="770.1" y="796.1" width="2.800" height="2.800" fill="#4f4f4f"/>
<path d="M802.700 791.700L805 789L807.300 791.700Z" fill="#4f4f4f"/><path d="M799 794.500H811M799 797.500H811M799 800.500H806" stroke="#4f4f4f" stroke-width="1.200"/>
<rect x="823" y="786" width="30" height="18" fill="#fbfbfb"/>
<rect x="832.600" y="789.500" width="11.800" height="12" fill="#fff" stroke="#4f4f4f" stroke-width="1.200"/><rect x="832" y="789" width="4" height="13" fill="#4f4f4f"/><rect x="837.200" y="792" width="5.800" height="2.800" fill="#4f4f4f"/><rect x="836" y="797" width="9" height="1.200" fill="#4f4f4f"/>
<rect x="868.600" y="789.500" width="11.800" height="12" fill="#f4f4f4" stroke="#4f4f4f" stroke-width="1.200"/><rect x="873.900" y="789.500" width="1.200" height="12" fill="#4f4f4f"/>
<path d="M870 792.500H872.800M870 794.500H872.800M870 796.500H872.800M870 798.500H872.800M876.200 792.500H879M876.200 794.500H879M876.200 796.500H879M876.200 798.500H878" stroke="#4f4f4f" stroke-width="1.100"/>
<rect x="964.500" y="794.500" width="6.500" height="1.200" fill="#444"/>
<rect x="984" y="793.700" width="84" height="3" fill="#a9a9a9"/>
<rect x="1026" y="790.700" width="1" height="9" fill="#999"/>
<rect x="1007.500" y="789.300" width="3.600" height="11.200" fill="#fff" stroke="#8a8a8a" stroke-width="1"/>
<path d="M1082 795.100H1089.200M1085.600 791.500V798.700" stroke="#333" stroke-width="1.300"/>
<rect x="1106" y="795" width="1.500" height="1.500" fill="#bdbdbd"/>
<rect x="1103" y="798" width="1.500" height="1.500" fill="#bdbdbd"/>
<rect x="1106" y="798" width="1.500" height="1.500" fill="#bdbdbd"/>
<rect x="1100" y="801" width="1.500" height="1.500" fill="#bdbdbd"/>
<rect x="1103" y="801" width="1.500" height="1.500" fill="#bdbdbd"/>
<rect x="1106" y="801" width="1.500" height="1.500" fill="#bdbdbd"/>
</svg>
<!--END-->
<div id="winL"></div><div id="winR"></div><div id="winB"></div>
</body>
</html>
